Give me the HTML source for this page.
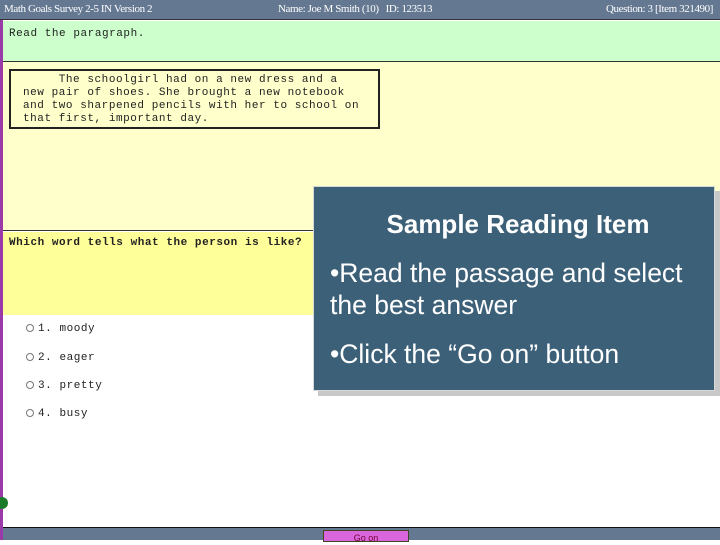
<!DOCTYPE html>
<html><head><meta charset="utf-8"><style>
*{margin:0;padding:0;box-sizing:border-box}
body{width:720px;height:540px;overflow:hidden;position:relative;background:#fff;font-family:"Liberation Sans",sans-serif}
.abs{position:absolute}
.top{left:0;top:0;width:720px;height:20px;background:#647891;color:#fff;font-family:"Liberation Serif",serif;font-size:11px;border-bottom:1px solid #333}
.top span{position:absolute;top:3px;letter-spacing:-0.4px}
.lb{left:0;top:20px;width:3px;height:520px;background:#9a3aa8}
.green{left:3px;top:21px;width:717px;height:41px;background:#ccffcc;border-bottom:1px solid #333}
.yel{left:3px;top:62px;width:717px;height:169px;background:#ffffcc;border-bottom:1px solid #333}
.q{left:3px;top:232px;width:717px;height:83px;background:#ffff99}
.mono{font-family:"Liberation Mono",monospace;font-size:11px;color:#222;letter-spacing:0.55px}
.pass{left:9px;top:69px;width:371px;height:60px;border:2px solid #222;padding:3px 0 0 12px;line-height:13px;white-space:pre;font-size:11px}
.opt{left:26px;font-size:11px}
.opt i{display:inline-block;width:8px;height:8px;border:1.5px solid #777;border-radius:50%;margin-right:4px;vertical-align:-1px}
.bot{left:3px;top:527px;width:717px;height:13px;background:#647891;border-top:1px solid #111}
.go{left:323px;top:530px;width:86px;height:12px;background:#d966dd;border:1px solid #442;font-size:9px;color:#703;text-align:center;line-height:14px}
.shadow{left:318px;top:191px;width:402px;height:205px;background:#c8c8c8}
.ov{left:313px;top:186px;width:402px;height:205px;background:#3c6078;border:1px solid #d8d8d8;color:#fff}
.globe{left:-4px;top:497px;width:12px;height:12px;border-radius:50%;background:#1a7a2a}
</style></head><body>
<div class="abs top"><span style="left:4px">Math Goals Survey 2-5 IN Version 2</span><span style="left:278px">Name: Joe M Smith (10)&nbsp;&nbsp; ID: 123513</span><span style="left:606px">Question: 3 [Item 321490]</span></div>
<div class="abs lb"></div>
<div class="abs green"><div class="abs mono" style="left:6px;top:7px">Read the paragraph.</div></div>
<div class="abs yel"></div>
<div class="abs mono pass">     The schoolgirl had on a new dress and a
new pair of shoes. She brought a new notebook
and two sharpened pencils with her to school on
that first, important day.</div>
<div class="abs q"><div class="abs mono" style="left:6px;top:5px;font-weight:bold">Which word tells what the person is like?</div></div>
<div class="abs mono opt" style="top:323px"><i></i>1. moody</div>
<div class="abs mono opt" style="top:352px"><i></i>2. eager</div>
<div class="abs mono opt" style="top:380px"><i></i>3. pretty</div>
<div class="abs mono opt" style="top:408px"><i></i>4. busy</div>
<div class="abs globe"></div>
<div class="abs bot"></div>
<div class="abs go">Go on</div>
<div class="abs shadow"></div>
<div class="abs ov">
<div class="abs" style="left:0;width:408px;top:22px;text-align:center;font-weight:bold;font-size:26px">Sample Reading Item</div>
<div class="abs" style="left:16px;top:70px;font-size:26.5px;line-height:32px;width:372px">•Read the passage and select the best answer</div>
<div class="abs" style="left:16px;top:151px;font-size:26.5px;line-height:32px">•Click the “Go on” button</div>
</div>
</body></html>
